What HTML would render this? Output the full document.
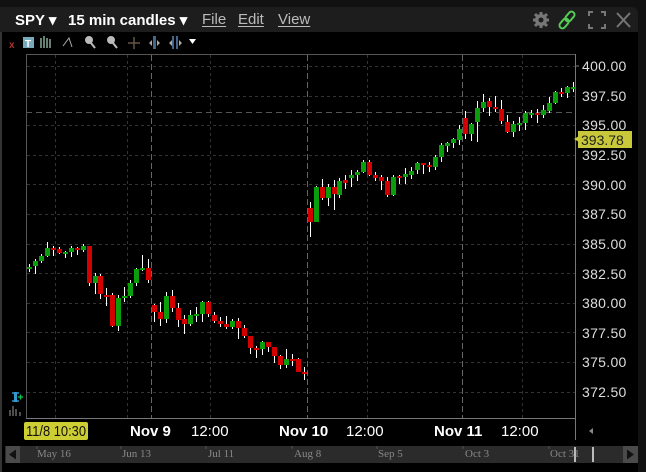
<!DOCTYPE html>
<html><head><meta charset="utf-8"><style>
body{margin:0;width:646px;height:472px;background:#111;overflow:hidden;font-family:"Liberation Sans",sans-serif;position:relative}
.panel{position:absolute;left:0;top:7px;width:638px;height:465px;background:#000;border-radius:0 6px 0 0}
.title{position:absolute;left:0;top:7px;width:638px;height:25px;background:#1d1d1d;border-radius:0 6px 0 0}
.t{position:absolute;color:#fff;font-size:15px;top:11px}
.m{position:absolute;color:#bbb;font-size:15px;top:11px;text-decoration:underline;text-decoration-thickness:1px;text-underline-offset:2px}
.lbl{position:absolute;left:582px;color:#ddd;font-size:14px;letter-spacing:0.3px}
.xl{position:absolute;top:423px;color:#fff;font-size:15px}
.sl{position:absolute;top:448px;color:#888;font-size:11px;font-family:"Liberation Serif",serif}
</style></head><body>
<div class="panel"></div>
<div class="title"></div>
<div class="t" style="left:15px;font-weight:bold">SPY ▾</div>
<div class="t" style="left:68px;font-weight:bold">15 min candles ▾</div>
<div class="m" style="left:202px">File</div>
<div class="m" style="left:238px">Edit</div>
<div class="m" style="left:278px">View</div>
<svg width="646" height="472" style="position:absolute;left:0;top:0">
<g transform="translate(541,20)" fill="#777"><circle r="6"/><g stroke="#777" stroke-width="3"><line x1="-8" y1="0" x2="8" y2="0"/><line x1="0" y1="-8" x2="0" y2="8"/><line x1="-6" y1="-6" x2="6" y2="6"/><line x1="-6" y1="6" x2="6" y2="-6"/></g><circle r="2.5" fill="#1d1d1d"/></g>
<g stroke="#5c5" stroke-width="2" fill="none" transform="rotate(-50 567 20)"><rect x="557" y="17" width="11" height="6" rx="3"/><rect x="566" y="17" width="11" height="6" rx="3"/></g>
<g stroke="#777" stroke-width="2" fill="none"><path d="M589 16v-4h4M601 12h4v4M605 24v4h-4M593 28h-4v-4"/><path d="M617 13l13 14M630 13l-13 14"/></g>
<g font-family="Liberation Sans" font-size="10" font-weight="bold"><text x="9" y="48" fill="#a33">x</text><rect x="23" y="37" width="11" height="11" fill="#7ab"/><text x="25" y="47" fill="#fff">T</text></g>
<g stroke="#8a9" stroke-width="1.5"><path d="M41 38v10M44 36v12M47 38v10M50 39v9"/></g>
<path d="M63 46l6-8 3 9" stroke="#aaa" fill="none"/>
<g fill="#bbb" stroke="#bbb" stroke-width="2"><circle cx="89" cy="40" r="3"/><line x1="91" y1="43" x2="95" y2="48"/><circle cx="111" cy="40" r="3"/><line x1="113" y1="43" x2="117" y2="48"/></g>
<path d="M128 43h12M134 37v12" stroke="#654" stroke-width="1.5"/>
<rect x="153" y="36" width="3" height="13" fill="#468"/><path d="M149 43l3-3v6zM160 43l-3-3v6z" fill="#aaa"/>
<path d="M173 36v13M177 36v13" stroke="#468" stroke-width="2"/><path d="M169 43l3-3v6zM182 43l-3-3v6z" fill="#aaa"/>
<path d="M189 39h7l-3.5 5z" fill="#fff"/>
<line x1="26" y1="54.5" x2="575" y2="54.5" stroke="#555"/>
<line x1="26.5" y1="54" x2="26.5" y2="418" stroke="#555"/>
<line x1="575.5" y1="54" x2="575.5" y2="440" stroke="#777"/>
<line x1="26" y1="418.5" x2="576" y2="418.5" stroke="#777"/>
<line x1="1" y1="32" x2="1" y2="472" stroke="#333" stroke-width="2"/>
<g stroke="#333" stroke-dasharray="3,3" id="hg"></g>
<g id="vg"></g>
<line x1="26" y1="112.5" x2="575" y2="112.5" stroke="#555" stroke-dasharray="6,4"/>
<g id="c"></g>
<g stroke="#777"><line x1="575" y1="66" x2="579" y2="66"/></g>
<path d="M574 139l5-3v6z" fill="#cc3"/>
<rect x="578" y="131" width="54" height="17" fill="#c8c83a"/>
<text x="581" y="145" font-size="14" fill="#222" font-family="Liberation Sans">393.78</text>
<g transform="translate(12,392)"><rect x="2" y="0" width="3" height="10" fill="#39c"/><path d="M0 1h7M0 9h7" stroke="#39c" stroke-width="1.5"/><path d="M6 5h5M8.5 2.5v5" stroke="#0c5" stroke-width="1.3"/></g>
<path d="M10 416v-6M13 416v-10M16 416v-7M20 416v-4" stroke="#999"/>
<rect x="24" y="422" width="64" height="18" rx="2" fill="#cdcd34"/>
<text x="26" y="436" font-size="14.5" fill="#111" font-family="Liberation Sans" textLength="60" lengthAdjust="spacingAndGlyphs">11/8 10:30</text>
<path d="M589 431l4-3v6z" fill="#888"/>
<rect x="5" y="446" width="633" height="17" fill="#2b2b2b"/>
<rect x="6" y="446" width="14" height="17" fill="#4a4a4a"/><path d="M9 454.5l7-5v10z" fill="#111"/>
<rect x="623" y="446" width="15" height="17" fill="#4a4a4a"/><path d="M634 454.5l-7-5v10z" fill="#111"/>
<path d="M575 447v15M593 447v15" stroke="#bbb" stroke-width="2"/>
<g stroke="#555"><path d="M37 446v3M121 446v3M206 446v3M292 446v3M377 446v3M463 446v3M549 446v3"/></g>
</svg>
<div class="lbl" style="top:58px">400.00</div>
<div class="lbl" style="top:88px">397.50</div>
<div class="lbl" style="top:117px">395.00</div>
<div class="lbl" style="top:147px">392.50</div>
<div class="lbl" style="top:177px">390.00</div>
<div class="lbl" style="top:206px">387.50</div>
<div class="lbl" style="top:236px">385.00</div>
<div class="lbl" style="top:266px">382.50</div>
<div class="lbl" style="top:295px">380.00</div>
<div class="lbl" style="top:325px">377.50</div>
<div class="lbl" style="top:354px">375.00</div>
<div class="lbl" style="top:384px">372.50</div>
<div class="xl" style="left:130px;font-weight:bold">Nov 9</div>
<div class="xl" style="left:191px">12:00</div>
<div class="xl" style="left:279px;font-weight:bold">Nov 10</div>
<div class="xl" style="left:346px">12:00</div>
<div class="xl" style="left:434px;font-weight:bold">Nov 11</div>
<div class="xl" style="left:501px">12:00</div>
<div class="sl" style="left:37px">May 16</div>
<div class="sl" style="left:122px">Jun 13</div>
<div class="sl" style="left:208px">Jul 11</div>
<div class="sl" style="left:294px">Aug 8</div>
<div class="sl" style="left:378px">Sep 5</div>
<div class="sl" style="left:465px">Oct 3</div>
<div class="sl" style="left:550px">Oct 31</div>
<script>
var ns="http://www.w3.org/2000/svg";
function el(p,t,a){var e=document.createElementNS(ns,t);for(var k in a)e.setAttribute(k,a[k]);p.appendChild(e);return e;}
var hg=document.getElementById('hg');
[66,95.5,125,154.5,184,214,243.5,273,302.5,332,362,391.5].forEach(function(y){el(hg,'line',{x1:27,x2:575,y1:Math.round(y)+.5,y2:Math.round(y)+.5});});
var vg=document.getElementById('vg');
[55,127,210,367,522].forEach(function(x){el(vg,'line',{x1:x+.5,x2:x+.5,y1:55,y2:418,stroke:'#333','stroke-dasharray':'3,3'});});
[151,307,462].forEach(function(x){el(vg,'line',{x1:x+.5,x2:x+.5,y1:55,y2:418,stroke:'#666','stroke-dasharray':'6,3'});});
var d=[[29,267,269,264,272,'g'],[35,261,266,259,274,'g'],[41,256,261,254,263,'g'],[47,248,256,242,257,'g'],[53,248,250,246,256,'r'],[59,249,253,247,254,'r'],[65,252,254,251,258,'g'],[71,248,252,246,257,'g'],[77,248,250,247,255,'r'],[83,246,250,244,252,'g'],[89,246,283,246,286,'r'],[95,276,283,273,294,'g'],[100,276,294,274,299,'r'],[106,295,297,288,306,'r'],[112,295,326,293,327,'r'],[118,298,326,295,331,'g'],[124,296,298,287,302,'g'],[130,283,296,280,298,'g'],[136,269,283,268,286,'g'],[142,268,270,255,271,'g'],[148,268,280,259,283,'r'],
[154,305,312,304,322,'r'],[160,312,319,302,326,'r'],[166,296,319,292,323,'g'],[172,296,308,290,312,'r'],[178,308,320,303,327,'r'],[184,319,324,315,334,'r'],[190,315,324,310,326,'g'],[196,314,316,307,322,'g'],[202,302,314,301,322,'g'],[208,302,314,301,317,'r'],[214,315,321,312,323,'r'],[220,321,324,317,327,'r'],[226,324,327,316,329,'r'],[232,321,327,319,329,'g'],[238,321,328,318,339,'r'],[244,328,336,325,338,'r'],[250,336,348,336,354,'r'],[256,348,350,346,358,'r'],[262,342,349,341,355,'g'],[268,342,347,342,352,'r'],[274,347,356,347,363,'r'],[280,356,365,355,369,'r'],[286,359,365,349,368,'g'],[292,359,361,354,366,'r'],[298,359,372,358,372,'r'],[304,372,374,367,380,'r'],
[310,208,222,202,237,'r'],[316,187,222,186,222,'g'],[322,187,198,179,200,'r'],[328,187,198,184,206,'g'],[334,187,194,180,210,'r'],[339,181,195,178,198,'g'],[345,180,183,175,189,'r'],[351,175,178,170,187,'g'],[357,172,175,170,181,'g'],[363,162,172,160,173,'g'],[369,162,175,160,176,'r'],[375,175,178,172,181,'r'],[381,177,181,175,190,'r'],[387,181,195,177,197,'r'],[393,177,195,175,196,'g'],[399,176,178,175,184,'r'],[405,174,177,168,184,'g'],[411,171,175,167,179,'g'],[417,163,170,162,174,'g'],[423,163,165,163,174,'r'],[429,165,167,162,172,'r'],[435,157,167,155,170,'g'],[441,145,157,143,162,'g'],[447,143,146,142,152,'g'],[453,139,143,138,148,'g'],[459,129,140,125,145,'g'],[465,118,134,111,139,'r'],[471,124,134,123,141,'g'],[477,108,122,101,142,'g'],[483,102,108,94,112,'g'],[489,101,107,98,116,'r'],[495,107,109,96,112,'r'],[501,109,121,100,124,'r'],[507,122,132,115,133,'r'],[513,124,132,121,137,'g'],[519,123,125,117,131,'g'],[525,113,123,111,130,'g'],[531,113,115,110,118,'g'],[537,113,115,109,123,'r'],[543,110,115,105,118,'g'],[549,103,111,97,113,'g'],[555,92,103,91,104,'g'],[561,92,94,88,97,'r'],[567,87,93,86,98,'g'],[573,87,89,82,92,'g']];
var c=document.getElementById('c');
d.forEach(function(k){el(c,'rect',{x:k[0],y:k[3],width:1,height:k[4]-k[3],fill:'#fff'});el(c,'rect',{x:k[0]-2,y:k[1],width:5,height:Math.max(2,k[2]-k[1]),fill:k[5]=='g'?'#0a9f0a':'#d40000'});});
</script>
</body></html>
